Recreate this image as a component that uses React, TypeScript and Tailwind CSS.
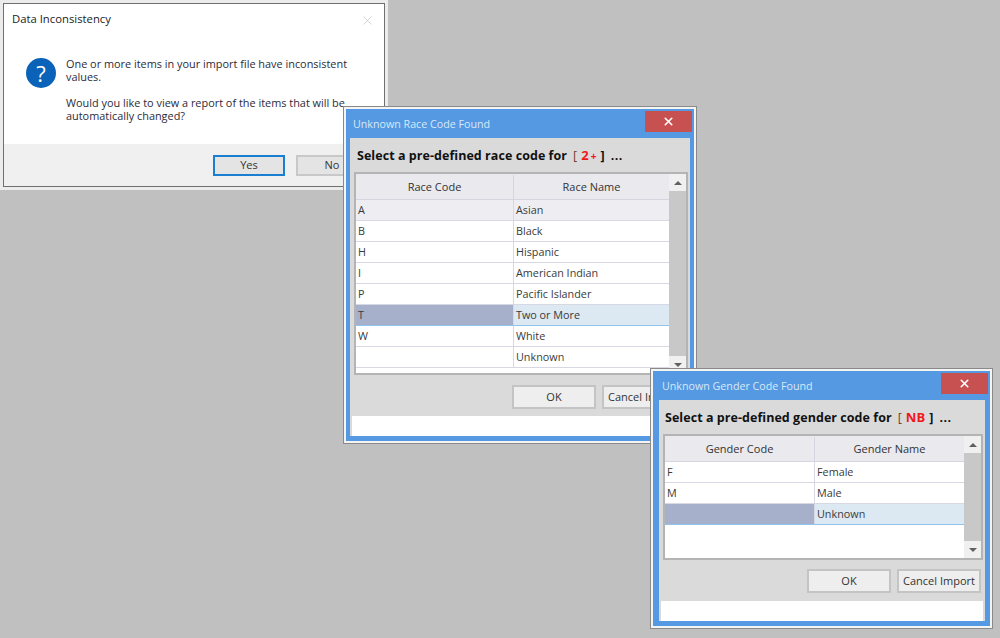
import type { ReactNode } from 'react';
import { X } from 'lucide-react';

const font = "font-['Open_Sans','Noto_Sans',sans-serif]";

function ScrollBar() {
  return (
    <div className="flex w-[17px] shrink-0 flex-col bg-[#c8c8c8]">
      <div className="flex h-[17px] items-center justify-center bg-[#f0f0f0]">
        <div className="h-0 w-0 border-x-[4px] border-b-[4px] border-x-transparent border-b-[#606060]" />
      </div>
      <div className="flex-1" />
      <div className="flex h-[17px] items-center justify-center bg-[#f0f0f0]">
        <div className="h-0 w-0 border-x-[4px] border-t-[4px] border-x-transparent border-t-[#606060]" />
      </div>
    </div>
  );
}

type Row = { code: string; name: string; selected?: boolean; tint?: boolean };

function Grid({ heads, rows, left, height }: { heads: string[]; rows: Row[]; left: string; height: string }) {
  return (
    <div className={`flex border-2 border-[#b4b4b4] bg-white ${height}`}>
      <div className="min-w-0 flex-1">
        <div className="flex h-[26px] border-b border-[#d5d5e0] bg-[#e9e9ee] pt-px text-[#333]">
          <div className={`flex items-center justify-center border-r border-[#d5d5e0] ${left}`}>{heads[0]}</div>
          <div className="flex flex-1 items-center justify-center">{heads[1]}</div>
        </div>
        {rows.map((r) => (
          <div
            key={r.name}
            className={`flex h-[21px] border-b text-[10.8px] ${r.selected ? 'border-[#8fc4ee] bg-[#dce8f2]' : r.tint ? 'border-[#d8d8e4] bg-[#eeeef2]' : 'border-[#d8d8e4] bg-white'}`}
          >
            <div className={`flex items-center border-r border-[#d8d8e4] pl-[2px] ${left} ${r.selected ? 'bg-[#a6b0cb]' : ''}`}>{r.code}</div>
            <div className="flex flex-1 items-center pl-[2px]">{r.name}</div>
          </div>
        ))}
      </div>
      <ScrollBar />
    </div>
  );
}

function FormButton({ label }: { label: string }) {
  return (
    <div className="flex h-[24px] w-[84px] items-center justify-center overflow-hidden whitespace-nowrap border-2 border-[#c4c4c4] bg-[#eeeeee] text-[#333]">
      {label}
    </div>
  );
}

function PickerWindow({ title, frame, closeOffset, children, className }: { title: string; frame: string; closeOffset: string; children: ReactNode; className: string }) {
  return (
    <div className={`absolute border-2 border-[#f4f4f4] outline outline-1 outline-[#8a8a8a] ${className}`}>
      <div className={`flex h-full flex-col bg-[#5499e2] pb-[5px] ${frame}`}>
        <div className="flex h-[29px] shrink-0 justify-between">
          <span className="pl-[3px] pt-[7px] text-[10.7px] text-[#d8e8f8]">{title}</span>
          <div className={`mt-[2px] flex h-[21px] w-[47px] items-center justify-center bg-[#c75050] ${closeOffset}`}>
            <X size={13} strokeWidth={3} className="text-white" />
          </div>
        </div>
        <div className="flex min-h-0 flex-1 flex-col bg-[#dadada]">{children}</div>
      </div>
    </div>
  );
}

function Prompt({ text, code, plus, inset }: { text: string; code: string; plus?: boolean; inset: string }) {
  return (
    <div className={`flex h-[34px] shrink-0 items-center pt-[2px] text-[12.5px] font-bold tracking-[0.05px] text-[#111] ${inset}`}>
      <span>{text}</span>
      <span className="ml-[6px] font-normal text-[#7a3a2a]">[</span>
      <span className="ml-[4px] text-[13px] text-[#f01818]">{code}</span>
      {plus && <span className="ml-[2px] text-[10px] text-[#f01818]">+</span>}
      <span className="ml-[4px]">]</span>
      <span className="ml-[6px] tracking-[0.5px]">...</span>
    </div>
  );
}

const races: Row[] = [
  { code: 'A', name: 'Asian', tint: true },
  { code: 'B', name: 'Black' },
  { code: 'H', name: 'Hispanic' },
  { code: 'I', name: 'American Indian' },
  { code: 'P', name: 'Pacific Islander' },
  { code: 'T', name: 'Two or More', selected: true },
  { code: 'W', name: 'White' },
  { code: '', name: 'Unknown' },
];

const genders: Row[] = [
  { code: 'F', name: 'Female' },
  { code: 'M', name: 'Male' },
  { code: '', name: 'Unknown', selected: true },
];

export default function App() {
  return (
    <div className={`relative h-[638px] w-[1000px] overflow-hidden bg-[#c0c0c0] text-[11px] text-[#3a3a3a] ${font}`}>
      {/* message box */}
      <div className="absolute left-0 top-0 h-[190px] w-[388px] border-[3px] border-[#ececec] outline outline-1 -outline-offset-4 outline-[#707070]">
        <div className="flex h-full flex-col bg-white pl-px pt-px">
          <div className="flex h-[32px] justify-between pl-[8px] pr-[10px] pt-[7px] text-[11.3px] text-[#222]">
            <span>Data Inconsistency</span>
            <X size={15} strokeWidth={1} className="mt-[2px] text-[#bbbbbb]" />
          </div>
          <div className="flex flex-1 gap-[10px] pl-[22px] pt-[21px]">
            <div className="mt-px flex h-[30px] w-[30px] shrink-0 items-center justify-center rounded-full bg-[#0a63b8] text-[22px] leading-none text-white">?</div>
            <div className="text-[10.9px] leading-[13px] text-[#2b2b3a]">
              <p>One or more items in your import file have inconsistent<br />values.</p>
              <p className="mt-[13px]">Would you like to view a report of the items that will be<br />automatically changed?</p>
            </div>
          </div>
          <div className="flex h-[43px] shrink-0 items-start gap-[11px] bg-[#f0f0f0] pl-[209px] pt-[11px]">
            <div className="flex h-[21px] w-[72px] items-center justify-center border-2 border-[#1a7fd0] bg-[#e4e4e4] text-[#333]">Yes</div>
            <div className="flex h-[21px] w-[72px] items-center justify-center border-2 border-[#c8c8c8] bg-[#e4e4e4] text-[#333]">No</div>
          </div>
        </div>
      </div>

      <PickerWindow title="Unknown Race Code Found" frame="px-[4px]" closeOffset="-mr-[2px]" className="left-[344px] top-[107px] h-[336px] w-[352px]">
        <Prompt text="Select a pre-defined race code for" code="2" plus inset="pl-[7px]" />
        <div className="pl-[4px] pr-[2px]">
          <Grid heads={['Race Code', 'Race Name']} rows={races} left="w-[158px]" height="h-[203px]" />
        </div>
        <div className="flex h-[41px] shrink-0 justify-end gap-[6px] pr-[4px] pt-[10px]">
          <FormButton label="OK" />
          <FormButton label="Cancel Import" />
        </div>
        <div className="mx-[2px] flex-1 bg-white" />
      </PickerWindow>

      <PickerWindow title="Unknown Gender Code Found" frame="pl-[6px] pr-[5px]" closeOffset="-mr-[3px]" className="left-[651px] top-[369px] h-[259px] w-[341px]">
        <Prompt text="Select a pre-defined gender code for" code="NB" inset="pl-[6px]" />
        <div className="pl-[4px] pr-[2px]">
          <Grid heads={['Gender Code', 'Gender Name']} rows={genders} left="w-[150px]" height="h-[126px]" />
        </div>
        <div className="flex h-[41px] shrink-0 justify-end gap-[6px] pr-[4px] pt-[9px]">
          <FormButton label="OK" />
          <FormButton label="Cancel Import" />
        </div>
        <div className="mx-[2px] flex-1 bg-white" />
      </PickerWindow>
    </div>
  );
}
